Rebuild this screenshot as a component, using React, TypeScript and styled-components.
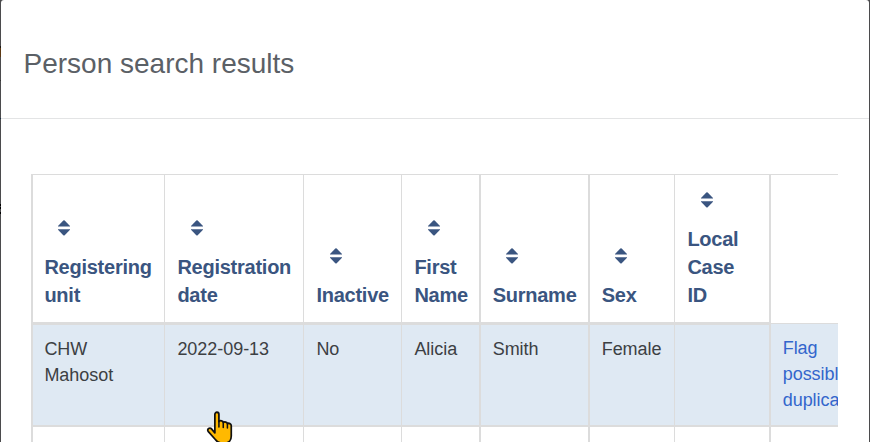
import React from "react";
import styled, { createGlobalStyle } from "styled-components";

const GlobalStyle = createGlobalStyle`
  *, *::before, *::after { box-sizing: border-box; }
  html, body { margin: 0; height: 442px; overflow: hidden; background: #4b4b4d; }
  body { font-family: "Liberation Sans", Arial, sans-serif; }
`;

const Backdrop = styled.div`
  position: relative;
  width: 870px;
  height: 442px;
  padding: 0 1px;
  overflow: hidden;
  background: linear-gradient(
    #4b4b4d 46px, #1f1a14 46px, #1f1a14 48px, #5c3913 48px, #5c3913 57px,
    #4b4b4d 57px, #4b4b4d 80px, #333 80px, #333 81px, #4b4b4d 81px,
    #4b4b4d 118px, #142d46 118px, #142d46 119px, #4b4b4d 119px,
    #4b4b4d 204px, #000 204px, #000 206px, #4b4b4d 206px, #4b4b4d 207px,
    #000 207px, #000 209px, #4b4b4d 209px, #4b4b4d 212px, #000 212px,
    #000 214px, #4b4b4d 214px
  ) 0 0 / 1px 442px no-repeat #4b4b4d;
`;

const Dialog = styled.section`
  display: flex;
  flex-direction: column;
  height: 442px;
  background: #fff;
  border-radius: 3px 3px 0 0;
  overflow: hidden;
`;

const DialogHeader = styled.header`
  flex: none;
  display: flex;
  align-items: center;
  height: 119px;
  padding: 10px 0 0 22.5px;
  border-bottom: 1px solid #e3e4e5;
`;

const Title = styled.h1`
  margin: 0;
  font-size: 28px;
  font-weight: 400;
  line-height: 36px;
  color: #5b6066;
  white-space: nowrap;
`;

const TableScroller = styled.div`
  flex: none;
  width: 807px;
  margin: 55px 0 0 30px;
  overflow: hidden;
`;

const Table = styled.div`
  display: grid;
  grid-template-columns: 133px 139px 98px 78px 109px 86px 95px 128px;
  grid-template-rows: 151px 102px 80px;
`;

const Cell = styled.div<{ $rule: number }>`
  min-width: 0;
  border: 0 solid #dcdcdc;
  border-left-width: ${(p) => p.$rule}px;
  padding-left: ${(p) => (p.$rule === 2 ? 11.7 : 12.4)}px;

  &:nth-child(8n + 1) {
    padding-left: 11.4px;
  }
`;

const HeaderCell = styled(Cell)<{ $blank?: boolean }>`
  display: flex;
  flex-direction: column;
  justify-content: flex-end;
  height: ${(p) => (p.$blank ? 150 : 151)}px;
  padding-bottom: 13px;
  border-top-width: 1px;
  border-bottom-width: ${(p) => (p.$blank ? 1 : 3)}px;
  color: #3a5580;
  font-size: 20px;
  letter-spacing: -0.25px;
  font-weight: 700;
  line-height: 28px;
`;

const Label = styled.span`
  display: block;
  white-space: pre-line;
`;

const BodyCell = styled(Cell)<{ $link?: boolean }>`
  margin-top: ${(p) => (p.$link ? -1 : 0)}px;
  padding-top: 11px;
  border-bottom-width: 2px;
  background: #dfe9f3;
  color: #3c4043;
  font-size: 18px;
  letter-spacing: -0.04px;
  line-height: 26px;
  white-space: pre-line;
`;

const NextCell = styled(Cell)`
  background: #fff;
`;

const FlagLink = styled.a`
  color: #3366cc;
  text-decoration: none;
`;

const SortSvg = styled.svg`
  display: block;
  width: 12px;
  height: 16px;
  margin: 0 0 17px 13.6px;
`;

const Pointer = styled.svg`
  position: absolute;
  left: 206px;
  top: 411px;
  width: 27px;
  height: 34px;
`;

const SortIcon = () => (
  <SortSvg viewBox="0 0 12 16" fill="#3a5580" aria-hidden="true">
    <path d="M0 6 5.300 .6Q6 0 6.700 .6L12 6v.5H0z" />
    <path d="M0 9.200h12v.6l-5.300 5.500q-.7.6-1.400 0L0 9.800z" />
  </SortSvg>
);

const columns = [
  { label: "Registering\nunit", value: "CHW\nMahosot", rule: 2 },
  { label: "Registration\ndate", value: "2022-09-13", rule: 1 },
  { label: "Inactive", value: "No", rule: 1 },
  { label: "First\nName", value: "Alicia", rule: 1 },
  { label: "Surname", value: "Smith", rule: 2 },
  { label: "Sex", value: "Female", rule: 2 },
  { label: "Local\nCase\nID", value: "", rule: 1 },
];

export default function App() {
  return (
    <>
      <GlobalStyle />
      <Backdrop>
        <Dialog>
          <DialogHeader>
            <Title>Person search results</Title>
          </DialogHeader>
          <TableScroller>
            <Table>
              {columns.map((c) => (
                <HeaderCell key={c.label} $rule={c.rule}>
                  <SortIcon />
                  <Label>{c.label}</Label>
                </HeaderCell>
              ))}
              <HeaderCell $rule={2} $blank />
              {columns.map((c) => (
                <BodyCell key={c.label} $rule={c.rule}>
                  {c.value}
                </BodyCell>
              ))}
              <BodyCell $rule={2} $link>
                <FlagLink>{"Flag\npossible\nduplicate"}</FlagLink>
              </BodyCell>
              {columns.map((c) => (
                <NextCell key={c.label} $rule={c.rule} />
              ))}
              <NextCell $rule={2} />
            </Table>
          </TableScroller>
        </Dialog>
        <Pointer viewBox="0 0 28 34" preserveAspectRatio="none" aria-hidden="true">
          <path
            d="M9.2 21.8V3.5c0-3 4.2-3 4.2 0v7c1.4-1.4 4.3-.9 4.5 1 1.3-1 4.1-.5 4.3 1.2 1.5-1 4 0 4 2.1V25c0 4-2.4 7-6 7h-4c-3 0-5-1.500-6.500-3.500L2.200 20.300c-1.300-2.200 1.500-4.200 3.500-2.500z"
            fill="#ffb900"
            stroke="#111"
            strokeWidth="1.8"
            strokeLinejoin="round"
          />
          <path
            d="M13.400 10v6M17.900 11.500v5M22.200 12.500v4.500"
            fill="none"
            stroke="#111"
            strokeWidth="1.600"
            strokeLinecap="round"
          />
        </Pointer>
      </Backdrop>
    </>
  );
}
